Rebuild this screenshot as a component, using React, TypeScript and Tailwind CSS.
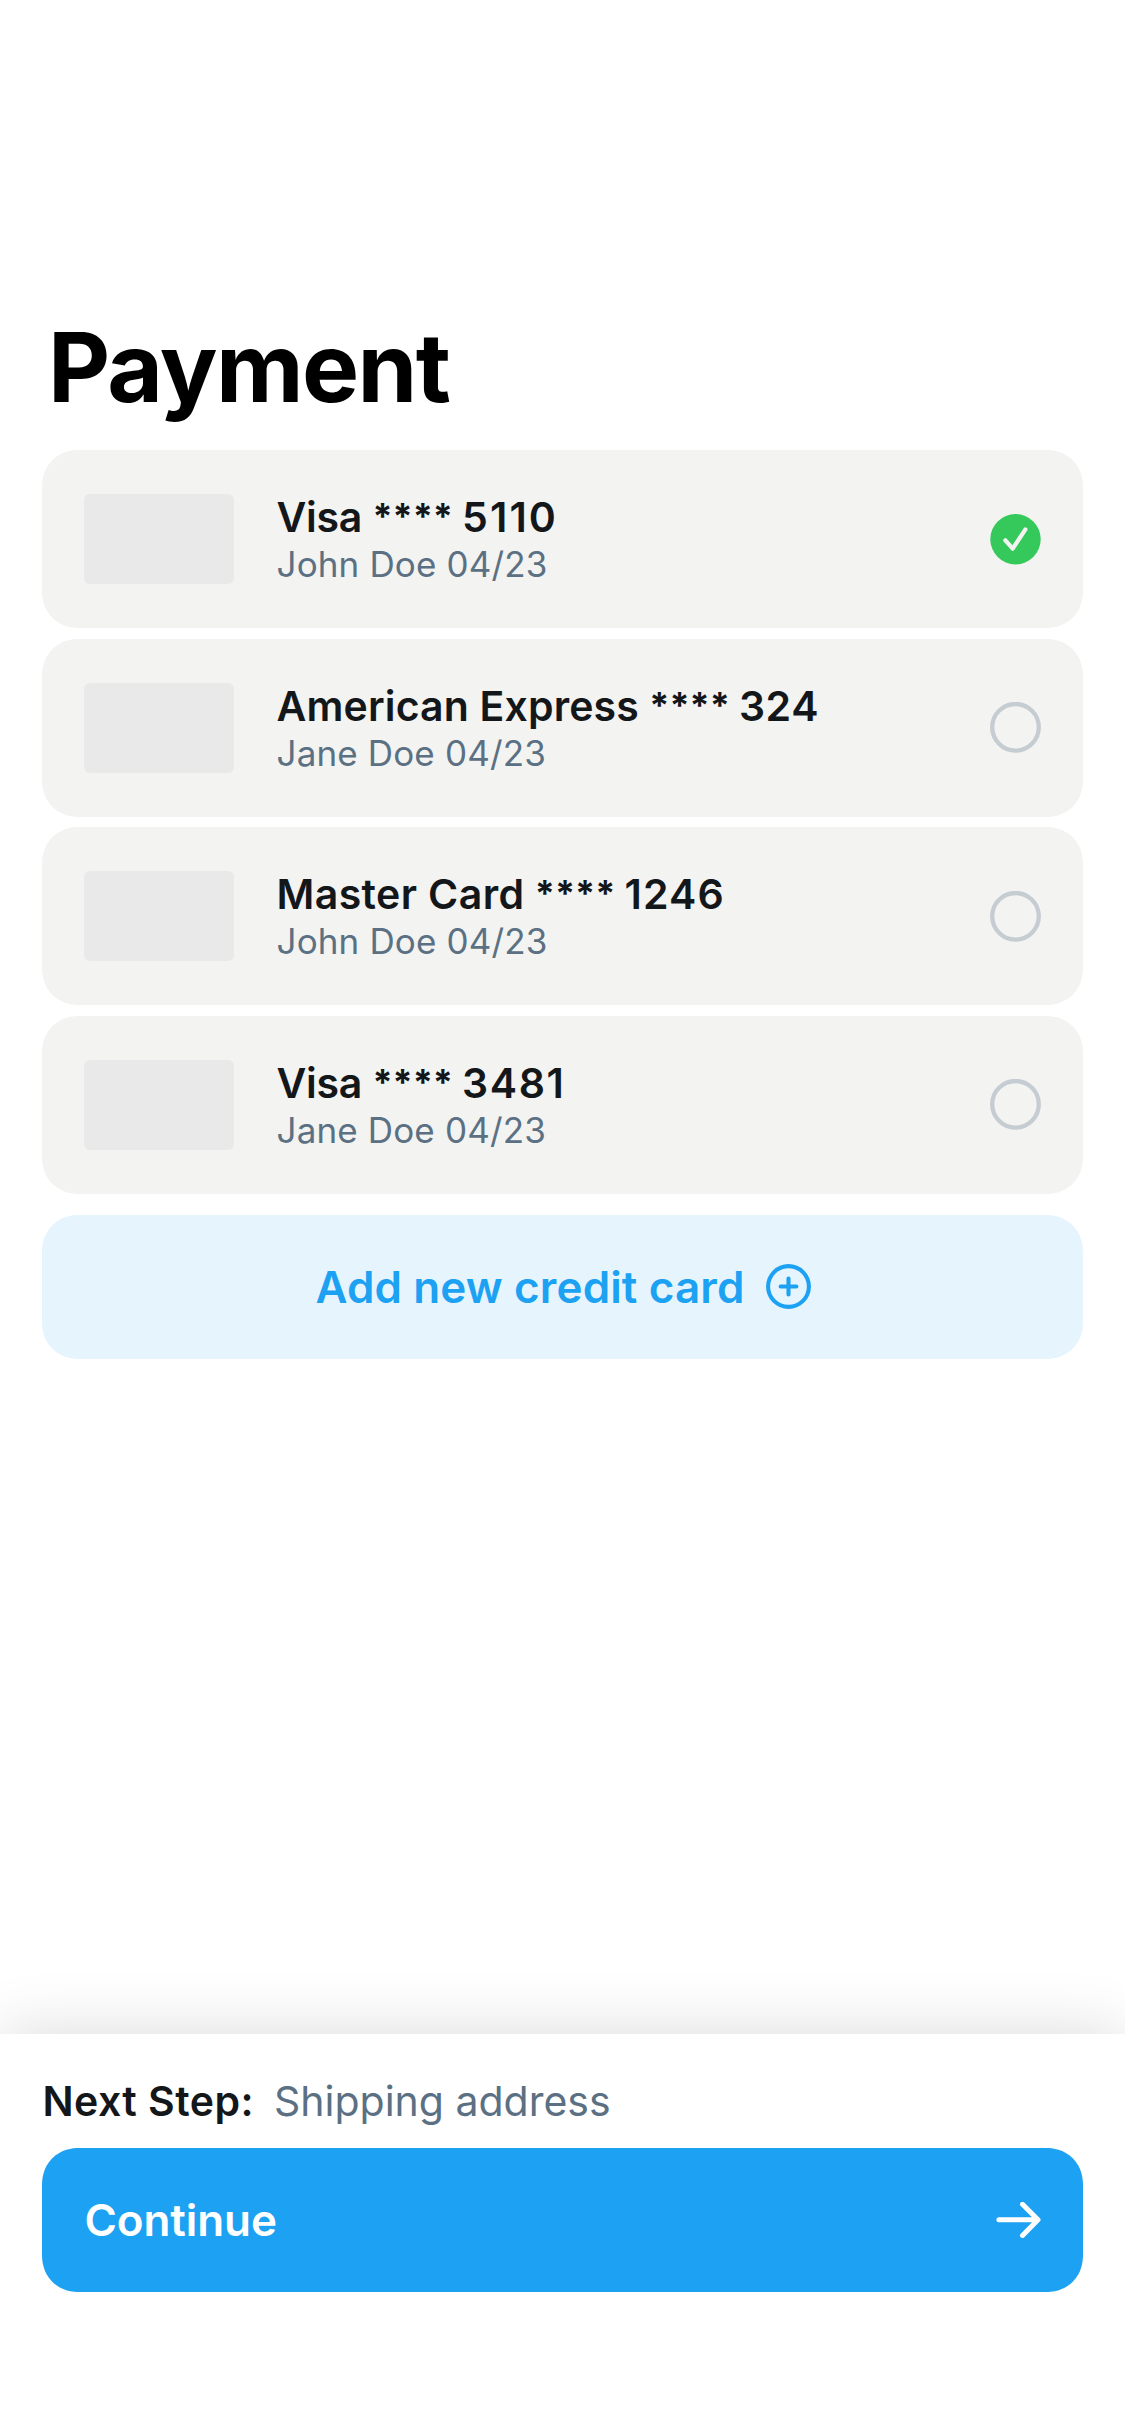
type Card = {
  brand: string;
  digits: string;
  owner: string;
  brandTracking: string;
  digitsTracking: string;
  selected?: boolean;
};

const cards: Card[] = [
  { brand: "Visa", digits: "5110", owner: "John Doe 04/23", brandTracking: "tracking-[-0.26px]", digitsTracking: "tracking-[2.1px]", selected: true },
  { brand: "American Express", digits: "324", owner: "Jane Doe 04/23", brandTracking: "tracking-[0.15px]", digitsTracking: "tracking-[0.6px]" },
  { brand: "Master Card", digits: "1246", owner: "John Doe 04/23", brandTracking: "tracking-[0.4px]", digitsTracking: "tracking-[1.15px]" },
  { brand: "Visa", digits: "3481", owner: "Jane Doe 04/23", brandTracking: "tracking-[-0.26px]", digitsTracking: "tracking-[1.6px]" },
];

function SelectedIcon() {
  return (
    <svg className="size-[51px] shrink-0" viewBox="0 0 51 51" fill="none">
      <circle cx="25.5" cy="25.2" r="25.2" fill="#35c85a" />
      <path
        d="M15.4 26.3 22.7 34.7 35.4 15.4"
        stroke="#f3f3f1"
        strokeWidth="4.2"
        strokeLinecap="round"
        strokeLinejoin="round"
      />
    </svg>
  );
}

function EmptyIcon() {
  return (
    <svg className="size-[51px] shrink-0" viewBox="0 0 51 51" fill="none">
      <circle cx="25.5" cy="25.3" r="23.3" stroke="#c5ccd2" strokeWidth="4.3" />
    </svg>
  );
}

function PlusCircleIcon() {
  return (
    <svg className="size-[45px] shrink-0" viewBox="0 0 45 45" fill="none" stroke="#1da1f2" strokeWidth="4.1" strokeLinecap="round">
      <circle cx="22.5" cy="22.5" r="20.4" />
      <path d="M14.6 22.5h15.8M22.5 14.6v15.8" />
    </svg>
  );
}

function ArrowIcon() {
  return (
    <svg className="h-9 w-[45px] shrink-0" viewBox="0 0 45 36" fill="none" stroke="#fff" strokeWidth="5" strokeLinecap="round" strokeLinejoin="round">
      <path d="M2.9 17.8H41.8M26.5 2.2 42 17.8 26.5 33.4" />
    </svg>
  );
}

function CardRow({ card }: { card: Card }) {
  return (
    <li className="flex h-[178px] items-center rounded-[37px] bg-[#f3f3f1] px-[42px] [corner-shape:superellipse(1.1)]">
      <div className="h-[90px] w-[150px] shrink-0 rounded-md bg-[#e9e9e9]" />
      <div className="ml-[42.5px] flex-1 whitespace-nowrap">
        <p className="text-[41px] leading-[50px] font-semibold text-[#14171a]">
          <span className={card.brandTracking}>{card.brand}</span>
          <span> </span>
          <span className="relative -top-[3px] text-[36px] leading-none font-bold">****</span>
          <span className="[word-spacing:-1.2px]"> </span>
          <span className={card.digitsTracking}>{card.digits}</span>
        </p>
        <p className="text-[35px] leading-[44px] tracking-[0.15px] text-[#5b7083]">{card.owner}</p>
      </div>
      {card.selected ? <SelectedIcon /> : <EmptyIcon />}
    </li>
  );
}

export default function App() {
  return (
    <div className="flex h-[2436px] w-[1125px] flex-col overflow-hidden bg-white font-['Inter',sans-serif]">
      <main className="flex-1 px-[42px] pt-[309px]">
        <h1 className="ml-[6px] text-[96px] leading-[116px] font-bold tracking-[-1.62px] text-black">Payment</h1>
        <ul className="mt-[25px] flex flex-col gap-[10.67px]">
          {cards.map((card) => (
            <CardRow key={card.digits} card={card} />
          ))}
        </ul>
        <button className="mt-[21px] flex h-36 w-full items-center justify-center gap-[21px] rounded-[37px] bg-[#e6f5fd] pl-px text-[44px] font-semibold tracking-[0.13px] text-[#1da1f2] [corner-shape:superellipse(1.1)]">
          <span>Add new credit card</span>
          <PlusCircleIcon />
        </button>
      </main>
      <footer className="h-[402px] bg-white px-[42px] pt-[42px] shadow-[0_0_60px_rgba(0,0,0,0.15)]">
        <div className="flex gap-[20px] pl-[0.5px] text-[41px] leading-[50px] whitespace-nowrap">
          <span className="font-semibold tracking-[0.45px] text-[#14171a]">Next Step:</span>
          <span className="text-[#5b7083]">Shipping address</span>
        </div>
        <button className="mt-[22px] flex h-36 w-full items-center justify-between rounded-[37px] bg-[#1da1f2] pr-[42px] pl-[42.5px] text-[44px] font-semibold tracking-[-0.09px] text-white [corner-shape:superellipse(1.1)]">
          <span>Continue</span>
          <ArrowIcon />
        </button>
      </footer>
    </div>
  );
}
